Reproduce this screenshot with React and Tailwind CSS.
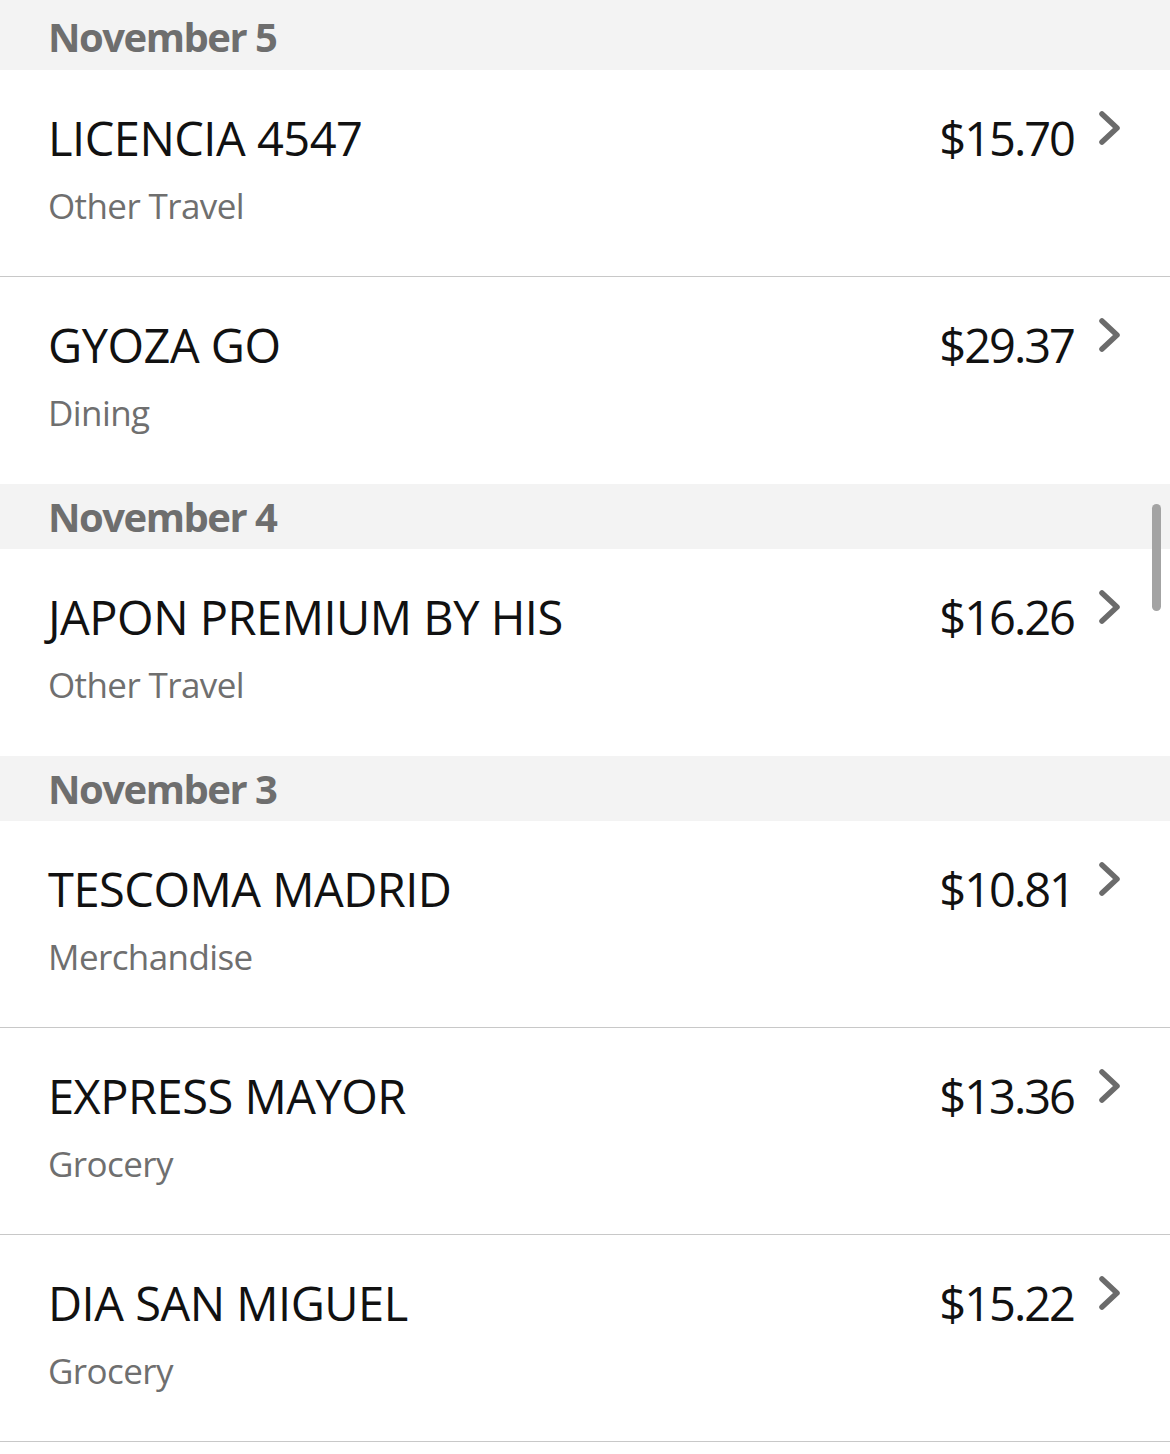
const sections = [
  {
    date: "November 5",
    first: true,
    items: [
      { name: "LICENCIA 4547", category: "Other Travel", amount: "$15.70" },
      { name: "GYOZA GO", category: "Dining", amount: "$29.37" },
    ],
  },
  {
    date: "November 4",
    items: [{ name: "JAPON PREMIUM BY HIS", category: "Other Travel", amount: "$16.26" }],
  },
  {
    date: "November 3",
    items: [
      { name: "TESCOMA MADRID", category: "Merchandise", amount: "$10.81" },
      { name: "EXPRESS MAYOR", category: "Grocery", amount: "$13.36" },
      { name: "DIA SAN MIGUEL", category: "Grocery", amount: "$15.22", border: true },
    ],
  },
]

function Chevron() {
  return (
    <svg width="28" height="38" viewBox="0 0 28 38" className="mt-[-6px] shrink-0">
      <path
        d="M6 5 L21 19 L6 33"
        fill="none"
        stroke="#6b6b6b"
        strokeWidth="5.5"
        strokeLinecap="round"
        strokeLinejoin="round"
      />
    </svg>
  )
}

function Row({ item, border }) {
  return (
    <div
      className={`h-[207px] bg-white pl-[48px] pr-[46px] pt-[45px] flex ${
        border ? "border-b border-[#c8c8c8]" : ""
      }`}
    >
      <div className="flex-1">
        <p className="text-[47px] leading-[47px] tracking-[-0.5px] text-[#111111]">{item.name}</p>
        <p className="mt-[26px] text-[35px] leading-[35px] tracking-[-0.6px] text-[#6f6f6f]">
          {item.category}
        </p>
      </div>
      <div className="flex items-start gap-[22px]">
        <p className="text-[47px] leading-[47px] tracking-[-2px] text-[#111111]">{item.amount}</p>
        <Chevron />
      </div>
    </div>
  )
}

export default function App() {
  return (
    <div
      className="relative w-[1170px] h-[1454px] overflow-hidden bg-white"
      style={{ fontFamily: '"Open Sans", "Noto Sans", sans-serif' }}
    >
      {sections.map((section) => (
        <section key={section.date}>
          <div
            className={`bg-[#f3f3f3] pl-[48px] ${
              section.first ? "h-[70px] pt-[17px]" : "h-[65px] pt-[13px]"
            }`}
          >
            <h2 className="text-[40px] leading-[40px] font-bold tracking-[-1.5px] text-[#6e6e6e]">
              {section.date}
            </h2>
          </div>
          {section.items.map((item, i) => (
            <Row
              key={item.name}
              item={item}
              border={item.border || i < section.items.length - 1}
            />
          ))}
        </section>
      ))}

      {/* scroll indicator */}
      <div className="absolute left-[1152px] top-[504px] w-[9px] h-[107px] rounded-full bg-[#a3a3a3]" />
    </div>
  )
}
